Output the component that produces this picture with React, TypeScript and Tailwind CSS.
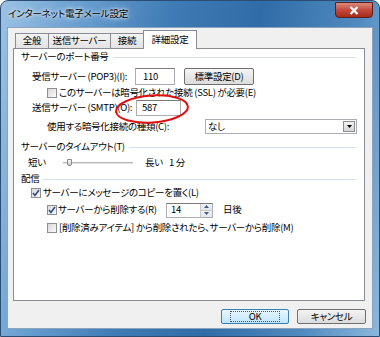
const font = "font-['Noto_Sans_CJK_JP',sans-serif] [font-feature-settings:'palt']";

function Check({ checked }: { checked?: boolean }) {
  return (
    <span className="w-[10px] h-[10px] shrink-0 border border-[#8e8f8f] bg-gradient-to-br from-[#d8d8d8] to-[#fafafa] flex items-center justify-center">
      {checked && (
        <svg width="8" height="8" viewBox="0 0 8 8">
          <path d="M1 4 L3 6.5 L7 1" fill="none" stroke="#2c4e8c" strokeWidth="1.6" />
        </svg>
      )}
    </span>
  );
}

function Header({ label, className }: { label: string; className: string }) {
  return (
    <div className={`h-[14px] flex items-center pl-[7px] pr-[8px] gap-[4px] ${className}`}>
      <span>{label}</span>
      <div className="flex-1 h-px bg-[#d5dfe5]" />
    </div>
  );
}

const Tab = ({ label, w, active }: { label: string; w: string; active?: boolean }) =>
  active ? (
    <div className={`${w} h-[19px] -ml-px -mb-px relative z-10 bg-white border border-b-0 border-[#898c95] flex items-center justify-center`}>
      {label}
    </div>
  ) : (
    <div className={`${w} h-[15px] -ml-px first:ml-0 bg-gradient-to-b from-[#f3f3f3] to-[#e3e3e3] border border-b-0 border-[#898c95] flex items-center justify-center`}>
      {label}
    </div>
  );

export default function App() {
  return (
    <div className={`w-[380px] h-[337px] bg-white text-[9.5px] tracking-[-0.3px] leading-none whitespace-nowrap text-black ${font}`}>
      <div className="relative w-[380px] h-[337px] rounded-t-[8px] border border-[#2c4d73] px-[6px] pb-[7px] flex flex-col bg-[linear-gradient(100deg,#9cc2e3_0%,#6a9fd0_18%,#3f7ab4_40%,#306ca7_60%,#5089bf_82%,#8bb7dc_100%)]">
        <div className="h-[26px] flex items-start justify-between">
          <span className="mt-[8px] ml-[1px] text-[9.5px] tracking-[-0.2px] [text-shadow:0_0_6px_#ffffff,0_0_3px_#ffffff]">
            インターネット電子メール設定
          </span>
          <div className="mt-[1px] w-[38px] h-[16px] rounded-b-[4px] border border-[#5a2020] bg-gradient-to-b from-[#d98a7e] via-[#c24a3a] to-[#a82a1a] flex items-center justify-center">
            <svg width="10" height="9" viewBox="0 0 10 9">
              <path d="M1.5 1 L8.5 8 M8.5 1 L1.5 8" stroke="#ffffff" strokeWidth="2.2" />
            </svg>
          </div>
        </div>

        <div className="flex-1 bg-[#f0f0f0] border border-[#8ba4bd] flex flex-col">
          <div className="pt-[2px] pl-[7px] h-[20px] flex items-end">
            <Tab label="全般" w="w-[34px]" />
            <Tab label="送信サーバー" w="w-[63px]" />
            <Tab label="接続" w="w-[34px]" />
            <Tab label="詳細設定" w="w-[54px]" active />
          </div>

          <div className="ml-[5px] w-[352px] h-[253px] bg-white border border-[#898c95] flex flex-col">
            <Header label="サーバーのポート番号" className="mt-[1px]" />

            <div className="mt-[4px] h-[17px] flex items-center pl-[18px]">
              <span className="w-[103px] shrink-0">受信サーバー (POP3)(I):</span>
              <div className="w-[40px] h-[17px] shrink-0 border border-[#abadb3] border-t-[#7a7a7a] flex items-center pl-[7px]">110</div>
              <div className="ml-[9px] w-[70px] h-[17px] shrink-0 rounded-[2px] border border-[#707070] bg-gradient-to-b from-[#f4f4f4] to-[#dcdcdc] flex items-center justify-center">
                標準設定(D)
              </div>
            </div>

            <div className="mt-[1px] h-[13px] flex items-center pl-[33px]">
              <Check />
              <span className="ml-[2px]">このサーバーは暗号化された接続 (SSL) が必要(E)</span>
            </div>

            <div className="mt-[1px] h-[16px] flex items-center pl-[18px]">
              <span className="w-[104px] shrink-0">送信サーバー (SMTP)(O):</span>
              <div className="w-[45px] h-[16px] shrink-0 border border-[#abadb3] border-t-[#7a7a7a] flex items-center pl-[5px]">587</div>
            </div>

            <div className="mt-[3px] h-[15px] flex items-center pl-[33px]">
              <span className="w-[158px] shrink-0">使用する暗号化接続の種類(C):</span>
              <div className="w-[152px] h-[15px] shrink-0 border border-[#abadb3] flex items-center justify-between pl-[2px] pr-[1px]">
                <span>なし</span>
                <div className="w-[12px] h-[11px] border border-[#8d8d8d] bg-gradient-to-b from-[#f2f2f2] to-[#d6d6d6] flex items-center justify-center">
                  <svg width="5" height="3" viewBox="0 0 5 3">
                    <path d="M0 0 H5 L2.5 3 Z" fill="#000" />
                  </svg>
                </div>
              </div>
            </div>

            <Header label="サーバーのタイムアウト(T)" className="mt-[6px]" />

            <div className="mt-[2px] h-[14px] flex items-center pl-[14px]">
              <span className="w-[35px] shrink-0">短い</span>
              <div className="relative w-[70px] h-[14px] shrink-0 flex items-center">
                <div className="w-full h-[2px] bg-[#e2e2e2] border-t border-[#b8b8b8]" />
                <div className="absolute left-[4px] top-[3px] w-[5px] h-[7px] bg-gradient-to-b from-[#f4f4f4] to-[#cfcfcf] border border-[#8a8a8a] rounded-b-[2px]" />
              </div>
              <span className="ml-[12px]">長い</span>
              <span className="ml-[6px]">1 分</span>
            </div>

            <Header label="配信" className="mt-[2px]" />

            <div className="h-[14px] flex items-center pl-[17px]">
              <Check checked />
              <span className="ml-[2px]">サーバーにメッセージのコピーを置く(L)</span>
            </div>

            <div className="mt-[2px] h-[16px] flex items-center pl-[33px]">
              <Check checked />
              <span className="ml-[1px] w-[108px] shrink-0">サーバーから削除する(R)</span>
              <div className="w-[47px] h-[15px] shrink-0 border border-[#abadb3] border-t-[#7a7a7a] flex items-center justify-between pl-[4px]">
                <span>14</span>
                <div className="w-[12px] h-full flex flex-col border-l border-[#c8c8c8]">
                  <div className="flex-1 bg-gradient-to-b from-[#f4f4f4] to-[#dfe6ee] border-b border-[#c8c8c8] flex items-center justify-center">
                    <svg width="5" height="3" viewBox="0 0 5 3"><path d="M0 3 H5 L2.5 0 Z" fill="#3d5e8c" /></svg>
                  </div>
                  <div className="flex-1 bg-gradient-to-b from-[#f4f4f4] to-[#dfe6ee] flex items-center justify-center">
                    <svg width="5" height="3" viewBox="0 0 5 3"><path d="M0 0 H5 L2.5 3 Z" fill="#3d5e8c" /></svg>
                  </div>
                </div>
              </div>
              <span className="ml-[10px]">日後</span>
            </div>

            <div className="mt-[3px] h-[14px] flex items-center pl-[33px]">
              <Check />
              <span className="ml-[2px]">[削除済みアイテム] から削除されたら、サーバーから削除(M)</span>
            </div>
          </div>

          <div className="mt-[8px] pr-[6px] flex justify-end gap-[8px]">
            <div className="w-[68px] h-[15px] rounded-[2px] border border-[#3c7fb1] bg-gradient-to-b from-[#eaf6fd] to-[#bee6fd] flex items-center justify-center">
              <span className="px-[18px] border border-dotted border-[#555] leading-[9px]">OK</span>
            </div>
            <div className="w-[69px] h-[15px] rounded-[2px] border border-[#707070] bg-gradient-to-b from-[#f4f4f4] to-[#dcdcdc] flex items-center justify-center">
              キャンセル
            </div>
          </div>
        </div>

        <svg className="absolute left-[112px] top-[92px]" width="78" height="32" viewBox="0 0 78 32">
          <ellipse cx="39" cy="16" rx="36" ry="13.5" fill="none" stroke="#e01010" strokeWidth="2" transform="rotate(-4 39 16)" />
        </svg>
      </div>
    </div>
  );
}
